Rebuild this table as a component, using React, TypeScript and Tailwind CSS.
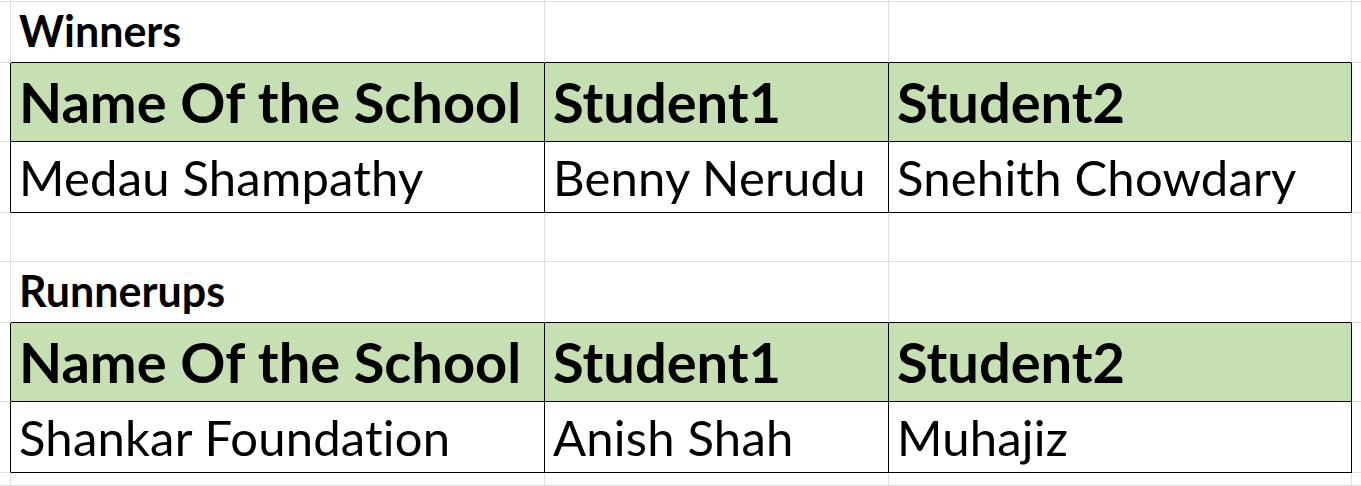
type Kind = 'blank' | 'title' | 'head' | 'data'

type Section = {
  title: string
  school: string
  student1: string
  student2: string
}

const SECTIONS: Section[] = [
  { title: 'Winners', school: 'Medau Shampathy', student1: 'Benny Nerudu', student2: 'Snehith Chowdary' },
  { title: 'Runnerups', school: 'Shankar Foundation', student1: 'Anish Shah', student2: 'Muhajiz' },
]

const HEADERS = ['Name Of the School', 'Student1', 'Student2']

function Cell({
  kind,
  text,
  rightDark,
  bottomDark,
  noRight,
}: {
  kind: Kind
  text?: string
  rightDark?: boolean
  bottomDark?: boolean
  noRight?: boolean
}) {
  const right = noRight ? 'border-r-0' : rightDark ? 'border-r border-r-black' : 'border-r border-r-[#dedede]'
  const bottom = bottomDark ? 'border-b border-b-black' : 'border-b border-b-[#dedede]'
  const bg = kind === 'head' ? 'bg-[#c6e0b4]' : 'bg-white'
  const type =
    kind === 'head'
      ? 'text-[56px] font-bold pb-[11px]'
      : kind === 'data'
        ? 'text-[49px] tracking-[0.2px] pb-[10px]'
        : kind === 'title'
          ? 'text-[43px] font-bold pb-[10px]'
          : ''
  return (
    <div className={`${right} ${bottom} ${bg} flex items-end overflow-visible whitespace-nowrap pl-2 leading-none text-black ${type}`}>
      {text}
    </div>
  )
}

function Spacer() {
  return (
    <>
      <Cell kind="blank" />
      <Cell kind="blank" />
      <Cell kind="blank" />
      <Cell kind="blank" />
      <Cell kind="blank" noRight />
    </>
  )
}

export default function App() {
  return (
    <div
      className="grid h-[486px] w-[1361px] overflow-hidden bg-white grid-cols-[11px_534px_344px_463px_1fr] grid-rows-[2px_61px_79px_71px_49px_61px_79px_71px_1fr] [font-variant-ligatures:none]"
      style={{ fontFamily: 'Lato, "Liberation Sans", sans-serif' }}
    >
      <Spacer />
      {SECTIONS.map((s, i) => (
        <div key={s.title} className="contents">
          {/* title row */}
          <Cell kind="blank" />
          <Cell kind="title" text={s.title} bottomDark />
          <Cell kind="blank" bottomDark />
          <Cell kind="blank" bottomDark />
          <Cell kind="blank" noRight />

          {/* header row */}
          <Cell kind="blank" rightDark />
          {HEADERS.map(h => (
            <Cell key={h} kind="head" text={h} rightDark bottomDark />
          ))}
          <Cell kind="blank" noRight />

          {/* data row */}
          <Cell kind="blank" rightDark />
          <Cell kind="data" text={s.school} rightDark bottomDark />
          <Cell kind="data" text={s.student1} rightDark bottomDark />
          <Cell kind="data" text={s.student2} rightDark bottomDark />
          <Cell kind="blank" noRight />

          {i === 0 && <Spacer />}
        </div>
      ))}
      <Spacer />
    </div>
  )
}
